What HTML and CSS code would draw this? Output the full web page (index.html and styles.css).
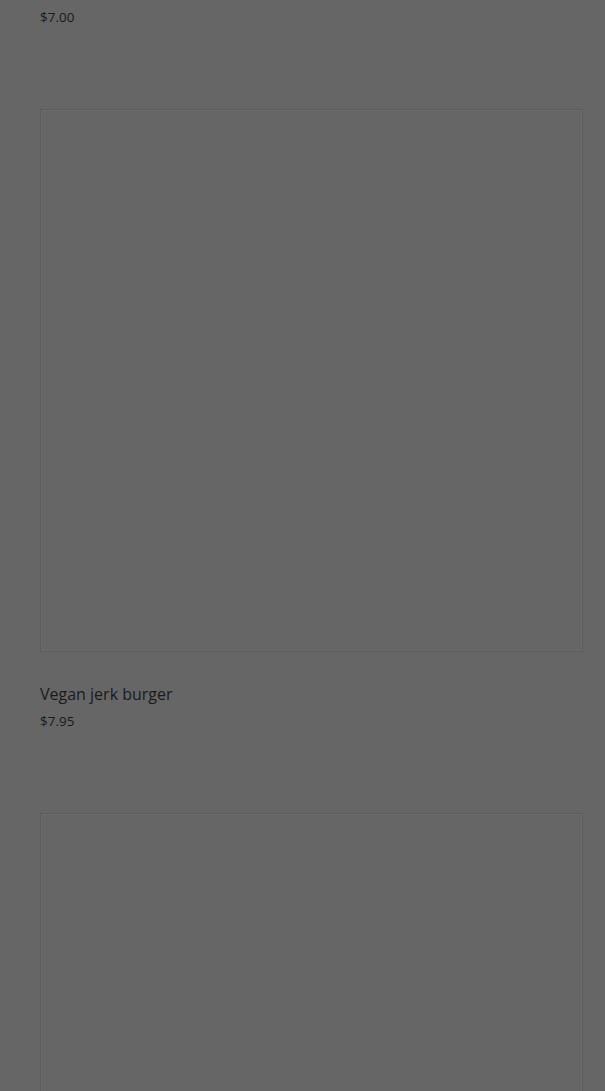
FILE: index.html
```html
<!DOCTYPE html>
<html lang="en">
<head>
    <meta charset="UTF-8">
    <meta name="viewport" content="width=device-width, initial-scale=1.0">
    <title>Menu</title>
    <link rel="stylesheet" href="styles.css">
</head>
<body>
    <div class="menu">
        <div class="item">
            <div class="item-price">$7.00</div>
        </div>

        <div class="item">
            <div class="item-photo"></div>
            <div class="item-name">Vegan jerk burger</div>
            <div class="item-price">$7.95</div>
        </div>

        <div class="item">
            <div class="item-photo"></div>
        </div>
    </div>
</body>
</html>
```

FILE: styles.css
```css
body {
    font-family: "Open Sans", Lato, sans-serif;
    background-color: #666;
    color: #1a1a1a;
    margin: 0;
}

.menu {
    padding: 7px 22px 0 40px;
}

.item {
    margin-bottom: 82px;
}

.item-photo {
    aspect-ratio: 1 / 1;
    border: 1px solid #5d5d5d;
    box-shadow: inset 0 0 0 1px #6b6b6b;
}

.item-name {
    margin-top: 32px;
    font-size: 16px;
    line-height: 20px;
}

.item-price {
    margin-top: 7px;
    font-size: 13.5px;
    line-height: 20px;
}

.item:first-child .item-price {
    margin-top: 0;
}
```
